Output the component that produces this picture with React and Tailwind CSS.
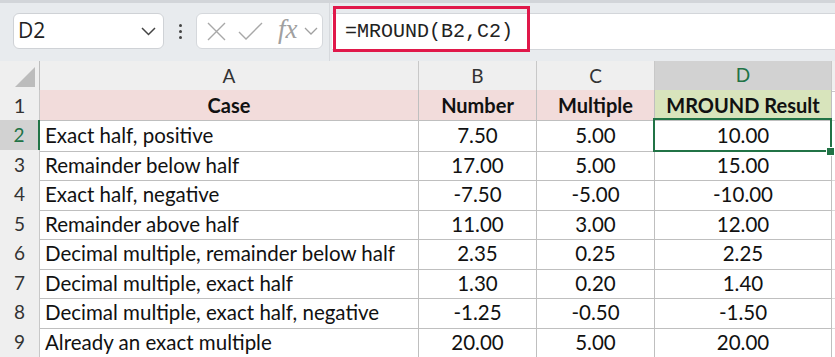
import React from "react"

const rows = [
  ["Exact half, positive", "7.50", "5.00", "10.00"],
  ["Remainder below half", "17.00", "5.00", "15.00"],
  ["Exact half, negative", "-7.50", "-5.00", "-10.00"],
  ["Remainder above half", "11.00", "3.00", "12.00"],
  ["Decimal multiple, remainder below half", "2.35", "0.25", "2.25"],
  ["Decimal multiple, exact half", "1.30", "0.20", "1.40"],
  ["Decimal multiple, exact half, negative", "-1.25", "-0.50", "-1.50"],
  ["Already an exact multiple", "20.00", "5.00", "20.00"],
]

const cols = "grid grid-cols-[40px_379px_118px_118px_177px_1fr]"

function FormulaBar() {
  return (
    <div className="relative h-[61px] bg-[#e8ebee] border-t-[3px] border-[#d2d5d9] flex items-start pt-[10px]">
      <div className="ml-[13px] w-[151px] h-[36px] bg-white rounded-[6px] border border-[#cfd2d6] flex items-center justify-between pl-[4px] pr-[7px]">
        <span className="text-[21px] text-[#222] font-['Open_Sans',sans-serif]">D2</span>
        <svg width="15" height="9" viewBox="0 0 15 9" fill="none" stroke="#444" strokeWidth="1.5">
          <path d="M1 1l6.5 6.5L14 1" />
        </svg>
      </div>
      <div className="w-[32px] h-[36px] flex flex-col items-center justify-center gap-[3px]">
        <span className="w-[3px] h-[3px] rounded-full bg-[#444]" />
        <span className="w-[3px] h-[3px] rounded-full bg-[#444]" />
        <span className="w-[3px] h-[3px] rounded-full bg-[#444]" />
      </div>
      <div className="w-[127px] h-[36px] bg-white rounded-[6px] border border-[#d5d8dc] flex items-center pl-[9px]">
        <svg width="21" height="21" viewBox="0 0 21 21" fill="none" stroke="#a8a8a8" strokeWidth="1.4">
          <path d="M2 2l17 17M19 2L2 19" />
        </svg>
        <svg className="ml-[11px]" width="25" height="19" viewBox="0 0 25 19" fill="none" stroke="#a8a8a8" strokeWidth="1.4">
          <path d="M1 10l7 7L24 1" />
        </svg>
        <span className="ml-[15px] italic text-[27px] leading-none -mt-[4px] text-[#a0a0a0] font-['Liberation_Serif',serif]">fx</span>
        <svg className="ml-[6px]" width="14" height="8" viewBox="0 0 14 8" fill="none" stroke="#a0a0a0" strokeWidth="1.3">
          <path d="M1 1l6 6 6-6" />
        </svg>
      </div>
      <div className="ml-[6px] w-px h-[58px] -mt-[10px] bg-[#d6d9dd]" />
      <div className="flex-1 ml-[2px] h-[37px] bg-white border-y border-[#d3d6da] flex items-center pl-[13px]">
        <span className="text-[20px] text-[#222] font-['Liberation_Mono',monospace]">=MROUND(B2,C2)</span>
      </div>
      <div className="absolute left-[333px] top-[3px] w-[197px] h-[46px] border-[3px] border-[#e0184a]" />
    </div>
  )
}

function App() {
  return (
    <div className="w-[835px] h-[357px] overflow-hidden bg-white font-['Lato',sans-serif] text-[#111]">
      <FormulaBar />
      <div className={`${cols} h-[29px] bg-[#efefef] text-[19px] text-[#333]`}>
        <div className="border-r border-b border-[#bdbdbd] flex items-end justify-end p-[4px]">
          <svg width="20" height="20" viewBox="0 0 20 20">
            <path d="M20 0L20 20L0 20Z" fill="#bcbcbc" />
          </svg>
        </div>
        <div className="border-r border-b border-[#c8c8c8] flex items-center justify-center">A</div>
        <div className="border-r border-b border-[#c8c8c8] flex items-center justify-center">B</div>
        <div className="border-r border-b border-[#c8c8c8] flex items-center justify-center">C</div>
        <div className="bg-[#d2d2d2] border-r border-[#c8c8c8] border-b-2 border-b-[#217346] text-[#217346] flex items-center justify-center">D</div>
        <div className="border-b border-[#c8c8c8]" />
      </div>
      <div className={`${cols} h-[30px] text-[20px] font-bold`}>
        <div className="bg-[#efefef] border-r border-b border-[#c8c8c8] flex items-center justify-center font-normal text-[#333]">1</div>
        <div className="bg-[#f2dcdb] border-r border-b border-[#bfbfbf] flex items-center justify-center">Case</div>
        <div className="bg-[#f2dcdb] border-r border-b border-[#bfbfbf] flex items-center justify-center">Number</div>
        <div className="bg-[#f2dcdb] border-r border-b border-[#bfbfbf] flex items-center justify-center">Multiple</div>
        <div className="bg-[#d8e4bc] border-r border-b border-[#bfbfbf] flex items-center justify-center">MROUND Result</div>
        <div className="border-b border-[#d9d9d9]" />
      </div>
      {rows.map((r, i) => {
        const sel = i === 0
        return (
          <div key={i} className={`${cols} h-[29.5px] text-[20.5px]`}>
            <div
              className={
                sel
                  ? "bg-[#d2d2d2] border-r-2 border-r-[#217346] border-b border-[#c8c8c8] flex items-center justify-center text-[19px] text-[#217346]"
                  : "bg-[#efefef] border-r border-b border-[#c8c8c8] flex items-center justify-center text-[19px] text-[#333]"
              }
            >
              {i + 2}
            </div>
            <div className="border-r border-b border-[#bfbfbf] flex items-center pl-[5px] whitespace-nowrap">{r[0]}</div>
            <div className="border-r border-b border-[#bfbfbf] flex items-center justify-center">{r[1]}</div>
            <div className="border-r border-b border-[#bfbfbf] flex items-center justify-center">{r[2]}</div>
            <div className={`relative ${sel ? "z-20" : ""} border-r border-b border-[#bfbfbf] flex items-center justify-center`}>
              {r[3]}
              {sel && (
                <>
                  <div className="absolute -left-[2px] -top-[2px] -right-[1px] -bottom-[1px] border-2 border-[#217346]" />
                  <div className="absolute -right-[3px] -bottom-[4px] w-[7px] h-[7px] bg-[#217346] outline outline-1 outline-white" />
                </>
              )}
            </div>
            <div className="border-b border-[#d9d9d9]" />
          </div>
        )
      })}
    </div>
  )
}

export default App
